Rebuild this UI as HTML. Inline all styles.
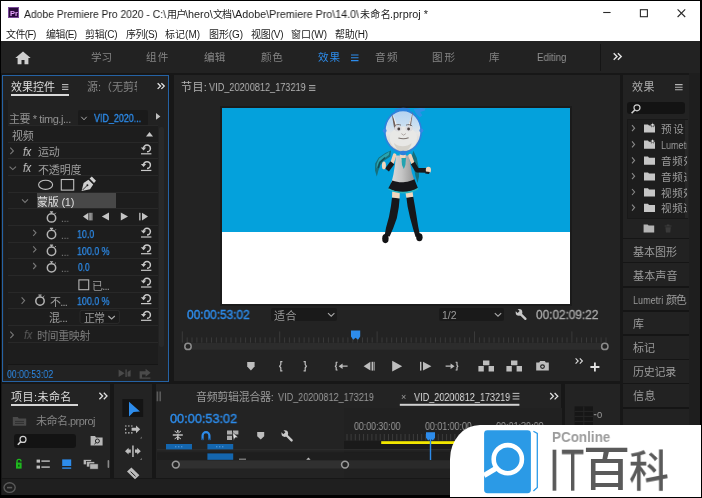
<!DOCTYPE html>
<html lang="zh-CN">
<head>
<meta charset="utf-8">
<title>Adobe Premiere Pro 2020</title>
<style>
*{box-sizing:border-box;margin:0;padding:0}
html,body{width:702px;height:498px;overflow:hidden;background:#000}
body{position:relative;font-family:"Liberation Sans","Noto Sans CJK SC",sans-serif;font-size:11px;color:#a7a7a7}
.a{position:absolute}
.p{position:absolute;background:#232323}
.x{position:absolute;white-space:nowrap;line-height:30px;height:30px;will-change:transform}
.h{position:absolute;height:1px;background:#2c2c2c}
svg{position:absolute;overflow:visible}
</style>
</head>
<body>
<!-- ===== title bar ===== -->
<div class="a" style="left:1.200px;top:1.200px;width:699.300px;height:39.800px;background:#fff"></div>
<div class="a" style="left:8px;top:7px;width:11px;height:11px;background:#2a0a3c;border:1px solid #7a4a9a"></div>
<svg style="left:600px;top:5px" width="100" height="16" viewBox="0 0 100 16"><g fill="none" stroke="#2a2a2a" stroke-width="1.100"><path d="M3.200 7.500h7.400"/><rect x="40.400" y="4.700" width="7" height="7"/><path d="M77.600 4.400l7.600 7.600M85.200 4.400l-7.600 7.600"/></g></svg>
<!-- ===== app bg ===== -->
<div class="a" style="left:1.200px;top:41px;width:699.300px;height:454.400px;background:#171717"></div>
<!-- workspace bar -->
<div class="p" style="left:1.200px;top:41px;width:699.300px;height:31.600px;background:#222"></div>
<svg style="left:15px;top:51px" width="16" height="14" viewBox="0 0 16 14"><path d="M8 0.5L0.3 7h2.3v6.3h3.9V9h3v4.3h3.9V7h2.3z" fill="#cfcfcf"/></svg>
<svg style="left:351px;top:54px" width="8" height="8" viewBox="0 0 8 8"><path d="M0 1h7.5M0 3.8h7.5M0 6.6h7.5" stroke="#2d8ceb" stroke-width="1.1"/></svg>
<div class="a" style="left:600px;top:44px;width:1px;height:27px;background:#151515"></div>
<svg style="left:613px;top:53px" width="9" height="7" viewBox="0 0 9 7"><path d="M0.7 0.3L4 3.5L0.7 6.7M4.9 0.3L8.2 3.5L4.9 6.7" stroke="#e4e4e4" stroke-width="1.4" fill="none"/></svg>

<!-- ===== PANELS ===== -->
<div class="p" id="ec" style="left:1.6px;top:75px;width:167.6px;height:306.6px;border:1.800px solid #2562a4;background:#222"></div>
<div class="p" id="pm" style="left:173.6px;top:75px;width:446px;height:306.4px"></div>
<div class="p" id="rp" style="left:623.4px;top:75px;width:66px;height:400px;background:#222"></div>
<div class="p" id="proj" style="left:2px;top:384px;width:108.400px;height:94.400px"></div>
<div class="p" id="tools" style="left:114px;top:384px;width:38.200px;height:94.400px"></div>
<div class="p" id="tl" style="left:156px;top:383.600px;width:405.400px;height:94.600px"></div>
<div class="p" id="am" style="left:565.200px;top:383.600px;width:54.600px;height:94.600px"></div>
<div class="p" id="status" style="left:1.500px;top:479.400px;width:699px;height:15.800px;background:#1f1f1f"></div>

<!-- effect controls -->
<div class="a" style="left:11.3px;top:94.4px;width:57.6px;height:1.8px;background:#d8d8d8"></div>
<svg style="left:62.2px;top:84px" width="7" height="6" viewBox="0 0 7 6"><path d="M0 0.6h6.4M0 3h6.4M0 5.4h6.4" stroke="#c8c8c8" stroke-width="1"/></svg>
<svg style="left:157.4px;top:83.2px" width="8" height="6.2" viewBox="0 0 9 7"><path d="M0.7 0.3L4 3.5L0.7 6.7M4.9 0.3L8.2 3.5L4.9 6.7" stroke="#e8e8e8" stroke-width="1.4" fill="none"/></svg>
<!-- clip dropdown -->
<div class="a" style="left:78px;top:110px;width:70px;height:15.5px;background:#1a1a1a;border-radius:2px"></div>
<svg style="left:80.5px;top:115.5px" width="6" height="5" viewBox="0 0 6 5"><path d="M0.3 0.8L3 3.8L5.7 0.8" stroke="#aaa" stroke-width="1" fill="none"/></svg>
<svg style="left:155.8px;top:113.4px" width="5" height="7" viewBox="0 0 5 7"><path d="M0 0L4.4 3.4L0 6.8z" fill="#c0c0c0"/></svg>
<!-- list area -->
<div class="a" style="left:7.5px;top:125.600px;width:150px;height:239px;background:#1d1d1d"></div>
<div class="a" style="left:159px;top:127px;width:4.600px;height:220px;background:#292929;border-radius:2px"></div>
<div class="a" style="left:3.600px;top:100px;width:4px;height:279px;background:#1c1c1c"></div>
<div class="h" style="left:7.5px;top:125.1px;width:150px;background:#282828"></div>
<div class="h" style="left:7.5px;top:141.8px;width:150px;background:#282828"></div>
<div class="h" style="left:7.5px;top:158.4px;width:150px;background:#282828"></div>
<div class="h" style="left:7.5px;top:175.0px;width:150px;background:#282828"></div>
<div class="h" style="left:7.5px;top:191.7px;width:150px;background:#282828"></div>
<div class="h" style="left:7.5px;top:208.3px;width:150px;background:#282828"></div>
<div class="h" style="left:7.5px;top:225.0px;width:150px;background:#282828"></div>
<div class="h" style="left:7.5px;top:241.6px;width:150px;background:#282828"></div>
<div class="h" style="left:7.5px;top:258.3px;width:150px;background:#282828"></div>
<div class="h" style="left:7.5px;top:274.9px;width:150px;background:#282828"></div>
<div class="h" style="left:7.5px;top:291.6px;width:150px;background:#282828"></div>
<div class="h" style="left:7.5px;top:308.2px;width:150px;background:#282828"></div>
<div class="h" style="left:7.5px;top:324.9px;width:150px;background:#282828"></div>
<div class="h" style="left:7.5px;top:341.5px;width:150px;background:#282828"></div>
<div class="h" style="left:7.5px;top:364px;width:150px;background:#161616"></div>
<svg style="left:145.6px;top:132.4px" width="7" height="5" viewBox="0 0 7 5"><path d="M0 4.5L3.5 0L7 4.5z" fill="#c8c8c8"/></svg>
<!-- mask highlight -->
<div class="a" style="left:37.2px;top:193.4px;width:78.4px;height:14.6px;background:#484848"></div>
<!-- chevrons -->
<svg style="left:0;top:0" width="170" height="380" viewBox="0 0 170 380">
<g fill="none" stroke="#787878" stroke-width="1.100">
<path d="M10.3 147.6L13.4 150.9L10.3 154.2"/>
<path d="M10.3 331.6L13.4 334.9L10.3 338.2"/>
<path d="M33.200 229.800L36 232.800L33.200 235.800"/>
<path d="M33.200 246.400L36 249.400L33.200 252.400"/>
<path d="M33.200 263L36 266L33.200 269"/>
<path d="M21.6 297.4L24.6 300.6L21.6 303.8"/>
<path d="M9.6 166.6L12.8 169.6L16 166.6"/>
<path d="M22 199.4L25 202.4L28 199.4"/>
<path d="M108.4 316L111.6 319L114.8 316" stroke="#aaa"/>
</g>
<!-- reset icons -->
<g id="rs" fill="none" stroke="#c8c8c8" stroke-width="1.5">
<path d="M143.600 148.400a3.400 3.400 0 1 1 3.400 3.400"/><path d="M140.800 147.400l2.800 3l2.600-3z" fill="#c8c8c8" stroke="none"/><path d="M141 153.800h10.400" stroke-width="1.200"/>
</g>
<use href="#rs" y="16.650"/><use href="#rs" y="83.200"/><use href="#rs" y="99.900"/><use href="#rs" y="116.500"/><use href="#rs" y="133.200"/><use href="#rs" y="149.800"/><use href="#rs" y="166.500"/>
<!-- mask shape tools -->
<ellipse cx="45.6" cy="184.8" rx="7" ry="4.6" fill="none" stroke="#c0c0c0" stroke-width="1.1"/>
<rect x="61.3" y="179.5" width="12.4" height="10.6" fill="none" stroke="#c0c0c0" stroke-width="1.1"/>
<path d="M81.600 191L83.600 183L88.400 179.800L93.200 184.600L90 189.200Z M89.600 178.600L91.800 176.600L96 180.800L94 183Z" fill="#d0d0d0"/><path d="M82.600 190L86.800 185.800" stroke="#1d1d1d" stroke-width="0.900"/><circle cx="87.400" cy="185.200" r="1" fill="#1d1d1d"/>
<!-- stopwatches -->
<g id="sw" fill="none" stroke="#b4b4b4" stroke-width="1.500"><circle cx="51.500" cy="217.900" r="4.200"/><path d="M49.900 211.800h3.200M51.500 211.800v1.800" stroke-width="1.200"/><path d="M54.600 214l1.200-1.200" stroke-width="1"/></g>
<use href="#sw" y="16.650"/><use href="#sw" y="33.300"/><use href="#sw" y="49.950"/><use href="#sw" x="-11.500" y="83.200"/>
<!-- keyframe nav -->
<g fill="#c4c4c4">
<path d="M83 216.6l5.4-3.8v7.6z"/><rect x="89.4" y="212.8" width="1.3" height="7.6"/><rect x="91.4" y="212.8" width="1" height="7.6"/>
<path d="M101.8 216.6l7.2-4v8z"/>
<path d="M128 216.6l-7.2-4v8z"/>
<rect x="139.2" y="212.8" width="1.3" height="7.6"/><path d="M148 216.6l-6-3.8v7.6z"/>
</g>
<!-- checkbox -->
<rect x="78.9" y="279.9" width="9.8" height="9.8" fill="none" stroke="#b4b4b4" stroke-width="1.1"/>
<!-- blend dropdown -->
<rect x="80" y="310.4" width="39.4" height="13" rx="2" fill="#1a1a1a" stroke="#2e2e2e" stroke-width="0.8"/>
<path d="M108.4 316L111.6 319L114.8 316" stroke="#aaa" stroke-width="1.1" fill="none"/>
<!-- bottom right icons -->
<g fill="#4a4a4a"><path d="M118.6 369.4l6 3.8l-6 3.8z"/><rect x="125.4" y="369.4" width="1.4" height="7.6"/><path d="M127.6 372l3-2v6.6h-3z"/>
<path d="M139.6 371.2h6v-2.4l5 4l-5 4v-2.4h-3.6v3.2h8.4v1.2h-10.8z"/></g>
</svg>

<!-- program monitor -->
<svg style="left:308.600px;top:84.600px" width="7" height="6" viewBox="0 0 7 6"><path d="M0 0.6h6.4M0 3h6.4M0 5.4h6.4" stroke="#b0b0b0" stroke-width="1"/></svg>
<div class="a" style="left:219.8px;top:105.8px;width:352.3px;height:200.2px;background:#1b1b1b"></div>
<div class="a" style="left:221.8px;top:107.8px;width:348.3px;height:196.2px;background:#fff"></div>
<div class="a" style="left:221.8px;top:107.8px;width:348.3px;height:124.600px;background:#04a1dc"></div>
<svg style="left:0;top:0" width="702" height="320" viewBox="0 0 702 320">
<defs>
<linearGradient id="hg" x1="0" y1="0" x2="0" y2="1"><stop offset="0" stop-color="#b4d2f0"/><stop offset="0.35" stop-color="#c9dff2"/><stop offset="0.55" stop-color="#e6e6e6"/><stop offset="0.85" stop-color="#d8d6d0"/><stop offset="1" stop-color="#bcb8b0"/></linearGradient>
<linearGradient id="tg" x1="0" y1="0" x2="1" y2="0"><stop offset="0" stop-color="#dcdcdc"/><stop offset="0.450" stop-color="#c4c4c4"/><stop offset="1" stop-color="#909090"/></linearGradient>
</defs>
<!-- hair back -->
<path d="M391 150.400L385.400 153L378.600 157.800L375.200 163.600L375 170.600L376.800 176.400L378.400 170.400L380.400 165L384.400 160.400L390.400 156.400Z" fill="#17707c"/>
<path d="M389.600 151.600L384.600 154.400L379.200 158.600L376.800 163.600L376.400 168.600L378.600 163.800L382.600 159.400L388.800 155Z" fill="#2fb6c2" opacity="0.750"/>
<path d="M385 157.400L379.600 162.400L378.400 168" stroke="#0c3a44" stroke-width="1.400" fill="none" opacity="0.700"/>
<path d="M413.400 150.800L416.800 158L418.800 168L419 176.400L417.600 183L415.400 176L413.600 166L411.600 157Z" fill="#14707e"/>
<!-- legs -->
<path d="M392 197.6l7.6 0.6l-0.8 9l-2 11l-3.6 10l-3.6 8.4l-5-0.8l1.4-8l3-11l2-11z" fill="#17171a"/>
<path d="M406.4 197.4l6.8-0.8l1.6 9l1.8 11l1.6 10l2 9.6l-4.6 0.8l-2.6-8.6l-3-11l-2.4-11z" fill="#17171a"/>
<path d="M392.2 191.4l7.6 0.4l-0.2 6.6l-7.6-0.8z" fill="#f2d6bc"/>
<path d="M405.4 191.6l7-0.6l0.9 5.8l-7 1z" fill="#f2d6bc"/>
<ellipse cx="385.4" cy="238.6" rx="3.2" ry="4.6" fill="#121214"/>
<ellipse cx="419.4" cy="237.2" rx="3.2" ry="4" fill="#121214"/>
<!-- torso -->
<path d="M396 155.6l13 0l1.2 8l1.6 9l3.6 10.6l-24.6 2l2.6-10.6l1.6-10z" fill="url(#tg)"/>
<path d="M399.6 154.6l6.4 0l-1.4 5.6l-2 1.6l-1.8-1.6z" fill="#f2d6bc"/>
<path d="M401.4 158l4.6 0l-0.6 7l-1.6 4l-1.8-4z" fill="#23a3b0"/>
<!-- skirt -->
<path d="M392.4 180.4c4 1.6 8.6 2.2 12.6 1.6c3.4-0.4 6.6-1.4 9.4-2.8l3.6 9c-4 2.6-9.6 4-15 4c-5.6 0-11-1.4-14.8-3.8z" fill="#17171b"/>
<path d="M388.6 188.2c4 2.4 9 3.6 14.4 3.6c5.4 0 11-1.4 15-4l0.4 1.4c-4 2.8-9.8 4.2-15.4 4.2c-5.6 0-11-1.4-14.8-3.8z" fill="#2ab4c0"/>
<!-- arms -->
<path d="M394.600 155.200L392.200 162.600" stroke="#f0d0b6" stroke-width="3.600" stroke-linecap="round" fill="none"/>
<path d="M410 155.600L412.800 163.200" stroke="#f0d0b6" stroke-width="3.600" stroke-linecap="round" fill="none"/>
<path d="M392.400 162.800L387 170" stroke="#19191c" stroke-width="4.800" fill="none"/>
<path d="M412.800 163L417 170.200L426 170.400" stroke="#19191c" stroke-width="4.600" stroke-linejoin="round" fill="none"/>
<ellipse cx="383.900" cy="165.400" rx="2" ry="3.900" fill="#f2d6bc"/>
<ellipse cx="428.400" cy="170" rx="2.600" ry="3.300" fill="#f2d6bc"/>
<path d="M425.600 171.400l4.400 0.600l-1.200 2l-3.600-0.400z" fill="#19191c"/>
<!-- head mask -->
<ellipse cx="403" cy="131.2" rx="18.2" ry="20.8" fill="url(#hg)" stroke="#2f80dc" stroke-width="1.6"/>
<path d="M391.6 113.4l6 14.6l-3.2 1.6z" fill="#6e5e5a"/><path d="M393.2 114.6l4.6 12.6l-1.8 0.8z" fill="#f4f2f0"/>
<path d="M413 111.6l-5.4 16.4l2.8 1.2z" fill="#7e6e6a"/><path d="M412 113.4l-4.2 13.8l1.6 0.6z" fill="#f6f4f2"/>
<ellipse cx="403.400" cy="138.600" rx="13.600" ry="12" fill="#e8e8e6"/>
<ellipse cx="398" cy="128.6" rx="3.8" ry="2.8" fill="#dcdce0"/><ellipse cx="409" cy="128.6" rx="3.8" ry="2.8" fill="#dcdce0"/>
<circle cx="398.8" cy="129" r="1.4" fill="#4a4040"/><circle cx="408.6" cy="129" r="1.4" fill="#4a4040"/>
<path d="M394.6 125.8c2.2-1.6 4.6-1.6 6.4-0.6M406 125.2c2-1 4.6-0.8 6.2 0.8" stroke="#7a7474" stroke-width="1" fill="none"/>
<path d="M398.4 138c3.2 1 7 1 10.2-0.2" stroke="#7c7470" stroke-width="1.1" fill="none"/>
<path d="M401.4 133.6l2.2 1.6l2.2-1.6" stroke="#a8a09c" stroke-width="0.9" fill="none"/>
<path d="M394 143c4.6 4.4 13 4.4 17.6 0c-1 5.4-4.6 8.6-8.8 8.6c-4 0-7.6-3.2-8.800-8.600z" fill="#cfcbc2" opacity="0.75"/>
<!-- mask control points -->
<circle cx="384.6" cy="130.8" r="2" fill="#3a88e6"/><circle cx="421.4" cy="130.6" r="2" fill="#3a88e6"/>
<path d="M395 110.6c4-2 10-2.4 14.600-0.800" stroke="#2f80dc" stroke-width="1.8" fill="none"/>
<path d="M413.6 109.200l7-1.200l5 0.600l-1 2.200l-4.400 1.200l2.200 3.200l-2.600 2.400l-3-3z" fill="#3a8ce8" opacity="0.8"/>
<ellipse cx="403.200" cy="153" rx="3.200" ry="2.200" fill="#2f80dc"/>
</svg>
<!-- controls -->
<div class="a" style="left:270.8px;top:308.4px;width:66.6px;height:12.6px;background:#1a1a1a;border-radius:2px"></div>
<div class="a" style="left:439.4px;top:308.4px;width:64.8px;height:12.6px;background:#1a1a1a;border-radius:2px"></div>
<svg style="left:0;top:300px" width="702" height="84" viewBox="0 300 702 84">
<g fill="none" stroke="#aaa" stroke-width="1.1"><path d="M328 313.2l3.2 3l3.2-3"/><path d="M494.8 313.2l3.2 3l3.2-3"/></g>
<!-- wrench -->
<g transform="translate(515.400,308.800)"><path d="M4 4L10 10" stroke="#c8c8c8" stroke-width="2.400" stroke-linecap="round"/><circle cx="3.600" cy="3.600" r="3.300" fill="#c8c8c8"/><path d="M-0.400 1.600L1.600 -0.400L4.200 2.200L2.200 4.200z" fill="#232323"/></g>
<!-- ruler -->
<g stroke="#3a3a3a" stroke-width="1"><path d="M182.3 331.4V342.6"/><path d="M187.2 337.4V342.6"/><path d="M192.0 337.4V342.6"/><path d="M196.9 337.4V342.6"/><path d="M201.8 337.4V342.6"/><path d="M206.7 337.4V342.6"/><path d="M211.5 337.4V342.6"/><path d="M216.4 337.4V342.6"/><path d="M221.3 337.4V342.6"/><path d="M226.1 337.4V342.6"/><path d="M231.0 337.4V342.6"/><path d="M235.9 337.4V342.6"/><path d="M240.7 337.4V342.6"/><path d="M245.6 337.4V342.6"/><path d="M250.5 337.4V342.6"/><path d="M255.4 337.4V342.6"/><path d="M260.2 337.4V342.6"/><path d="M265.1 337.4V342.6"/><path d="M270.0 337.4V342.6"/><path d="M274.8 337.4V342.6"/><path d="M279.7 331.4V342.6"/><path d="M284.6 337.4V342.6"/><path d="M289.4 337.4V342.6"/><path d="M294.3 337.4V342.6"/><path d="M299.2 337.4V342.6"/><path d="M304.1 337.4V342.6"/><path d="M308.9 337.4V342.6"/><path d="M313.8 337.4V342.6"/><path d="M318.7 337.4V342.6"/><path d="M323.5 337.4V342.6"/><path d="M328.4 337.4V342.6"/><path d="M333.3 337.4V342.6"/><path d="M338.1 337.4V342.6"/><path d="M343.0 337.4V342.6"/><path d="M347.9 337.4V342.6"/><path d="M352.8 337.4V342.6"/><path d="M357.6 337.4V342.6"/><path d="M362.5 337.4V342.6"/><path d="M367.4 337.4V342.6"/><path d="M372.2 337.4V342.6"/><path d="M377.1 331.4V342.6"/><path d="M382.0 337.4V342.6"/><path d="M386.8 337.4V342.6"/><path d="M391.7 337.4V342.6"/><path d="M396.6 337.4V342.6"/><path d="M401.5 337.4V342.6"/><path d="M406.3 337.4V342.6"/><path d="M411.2 337.4V342.6"/><path d="M416.1 337.4V342.6"/><path d="M420.9 337.4V342.6"/><path d="M425.8 337.4V342.6"/><path d="M430.7 337.4V342.6"/><path d="M435.5 337.4V342.6"/><path d="M440.4 337.4V342.6"/><path d="M445.3 337.4V342.6"/><path d="M450.2 337.4V342.6"/><path d="M455.0 337.4V342.6"/><path d="M459.9 337.4V342.6"/><path d="M464.8 337.4V342.6"/><path d="M469.6 337.4V342.6"/><path d="M474.5 331.4V342.6"/><path d="M479.4 337.4V342.6"/><path d="M484.2 337.4V342.6"/><path d="M489.1 337.4V342.6"/><path d="M494.0 337.4V342.6"/><path d="M498.9 337.4V342.6"/><path d="M503.7 337.4V342.6"/><path d="M508.6 337.4V342.6"/><path d="M513.5 337.4V342.6"/><path d="M518.3 337.4V342.6"/><path d="M523.2 337.4V342.6"/><path d="M528.1 337.4V342.6"/><path d="M532.9 337.4V342.6"/><path d="M537.8 337.4V342.6"/><path d="M542.7 337.4V342.6"/><path d="M547.6 337.4V342.6"/><path d="M552.4 337.4V342.6"/><path d="M557.3 337.4V342.6"/><path d="M562.2 337.4V342.6"/><path d="M567.0 337.4V342.6"/><path d="M571.9 331.4V342.6"/><path d="M576.8 337.4V342.6"/><path d="M581.6 337.4V342.6"/><path d="M586.5 337.4V342.6"/><path d="M591.4 337.4V342.6"/><path d="M596.3 337.4V342.6"/><path d="M601.1 337.4V342.6"/><path d="M606.0 337.4V342.6"/></g>
<rect x="184" y="343" width="424" height="6.8" rx="3.4" fill="#2c2c2c"/>
<circle cx="188" cy="346.4" r="3.2" fill="#232323" stroke="#8c8c8c" stroke-width="1.5"/>
<circle cx="604.8" cy="346.4" r="3.2" fill="#232323" stroke="#8c8c8c" stroke-width="1.5"/>
<path d="M351 330.4h9.2v6l-2.2 3.4l-2.4-2l-2.4 2l-2.2-3.4z" fill="#2d8ceb"/>
<!-- transport -->
<g fill="#bdbdbd">
<path d="M247.2 362h7.4v4.4l-3.7 4l-3.7-4z"/>
<path d="M336 361.8h1.6v1h-0.8v2.6l-0.8 0.8l0.8 0.8v2.6h0.8v1h-1.6l-0.4-0.4v-2.8l-1-1.2l1-1.2v-2.8z M347.6 365.6h-5v-2.2l-4 2.8l4 2.8v-2.2h5z"/>
<path d="M363.6 366.2l6.8-4.4v8.8z"/><rect x="371.6" y="361.8" width="1.4" height="8.8"/><rect x="373.6" y="361.8" width="1" height="8.8"/>
<path d="M392.2 360.8l10 5.4l-10 5.4z"/>
<rect x="420" y="361.8" width="1.4" height="8.8"/><path d="M431.4 366.2l-8.4-4.4v8.8z"/>
<path d="M445.6 365.6h5v-2.2l4 2.8l-4 2.8v-2.2h-5z M457.2 361.8h-1.6v1h0.8v2.6l0.8 0.8l-0.8 0.8v2.6h-0.8v1h1.6l0.4-0.4v-2.8l1-1.2l-1-1.2v-2.8z"/>
<path d="M478.4 366h5.4v5.6h-5.4z M488.6 366h5.4v5.6h-5.4z M483 360.6h6.4v4.6h-6.4z"/>
<path d="M506.4 366h5.4v5.6h-5.4z M516.6 366h5.4v5.6h-5.4z M511 360.6h6.4v4.6h-6.4z"/>
<path d="M536.2 362.6h3l1-1.6h4.6l1 1.6h3v8h-12.6z"/>
</g>
<circle cx="542.5" cy="366.6" r="2.4" fill="#232323"/><circle cx="542.5" cy="366.6" r="1.2" fill="#bdbdbd"/>
<g fill="none" stroke="#bdbdbd" stroke-width="1.2">
<path d="M282.4 361.6h-1.6v3l-1.2 1.6l1.2 1.6v3h1.6"/>
<path d="M303.6 361.6h1.6v3l1.2 1.6l-1.2 1.6v3h-1.6"/>
</g>
<path d="M575.6 358.4l2.6 2.6l-2.6 2.6M579.8 358.4l2.6 2.6l-2.6 2.6" stroke="#dcdcdc" stroke-width="1.1" fill="none"/>
<path d="M590.4 367h9M594.9 362.6v8.8" stroke="#e0e0e0" stroke-width="1.8" fill="none"/>
</svg>

<!-- right panel -->
<div class="a" style="left:689.400px;top:73px;width:11.100px;height:422.400px;background:#1e1e1e"></div>
<svg style="left:674.8px;top:84px" width="8" height="7" viewBox="0 0 8 7"><path d="M0 0.6h7.6M0 3.2h7.6M0 5.8h7.6" stroke="#b4b4b4" stroke-width="1.1"/></svg>
<div class="a" style="left:627.4px;top:101.6px;width:57.2px;height:12.8px;background:#131313;border-radius:3px"></div>
<svg style="left:631.4px;top:103.8px" width="10" height="10" viewBox="0 0 10 10"><circle cx="6" cy="3.8" r="3" fill="none" stroke="#d0d0d0" stroke-width="1.2"/><path d="M3.8 6L0.6 9.2" stroke="#d0d0d0" stroke-width="1.6"/></svg>
<div class="a" style="left:627.4px;top:118.6px;width:61px;height:100px;background:#1d1d1d;border:1px solid #181818"></div>
<div class="a" style="left:685.4px;top:119.6px;width:2.6px;height:98px;background:#272727"></div>
<svg style="left:0;top:0" width="702" height="240" viewBox="0 0 702 240">
<g id="rrow">
<path d="M632 125.2L634.6 128.2L632 131.2" fill="none" stroke="#8a8a8a" stroke-width="1.1"/>
<path d="M644 124.4h4l1 1.2h6v7h-11z" fill="#c6c6c6"/>
</g>
<use href="#rrow" y="16.2"/><use href="#rrow" y="32.2"/><use href="#rrow" y="48"/><use href="#rrow" y="63.8"/><use href="#rrow" y="79.4"/>
<path d="M652.6 122.6l0.7 1.5l1.6 0.2l-1.2 1.1l0.3 1.6l-1.4-0.8l-1.4 0.8l0.3-1.6l-1.2-1.1l1.6-0.2z" fill="#e0e0e0" stroke="#1d1d1d" stroke-width="0.5"/>
<path d="M652.6 138.8l0.7 1.5l1.6 0.2l-1.2 1.1l0.3 1.6l-1.4-0.8l-1.4 0.8l0.3-1.6l-1.2-1.1l1.6-0.2z" fill="#e0e0e0" stroke="#1d1d1d" stroke-width="0.5"/>
<path d="M643.6 224.4h4l1 1.2h5.6v6.8h-10.6z" fill="#b4b4b4"/>
<path d="M664.6 225.6h7v0.9h-7z M665.4 227.2h5.4l-0.5 5.4h-4.4z M666.8 224.6h2.6v1h-2.6z" fill="#3a3a3a"/>
</g>
</svg>
<div class="h" style="left:623.400px;top:237.6px;width:66px;height:1.500px;background:#151515"></div>
<div class="h" style="left:623.400px;top:261.8px;width:66px;height:1.500px;background:#151515"></div>
<div class="h" style="left:623.400px;top:286.0px;width:66px;height:1.500px;background:#151515"></div>
<div class="h" style="left:623.400px;top:310.2px;width:66px;height:1.500px;background:#151515"></div>
<div class="h" style="left:623.400px;top:334.4px;width:66px;height:1.500px;background:#151515"></div>
<div class="h" style="left:623.400px;top:358.6px;width:66px;height:1.500px;background:#151515"></div>
<div class="h" style="left:623.400px;top:382.8px;width:66px;height:1.500px;background:#151515"></div>
<div class="h" style="left:623.400px;top:407.0px;width:66px;height:1.500px;background:#151515"></div>

<!-- project panel -->
<div class="a" style="left:11.4px;top:404.2px;width:67px;height:2px;background:#d4d4d4"></div>
<div class="a" style="left:13.6px;top:434px;width:62px;height:14px;background:#131313;border-radius:3px"></div>
<svg style="left:0;top:380px" width="702" height="118" viewBox="0 380 702 118">
<path d="M99.4 392.8L102.6 396L99.4 399.2M103.8 392.8L107 396L103.8 399.2" stroke="#e0e0e0" stroke-width="1.3" fill="none"/>
<!-- bin icon -->
<path d="M12.8 417h5l1 1.4h7.4v7.4h-13.4z" fill="#4a4a4a"/><path d="M15 421.4h9M15 423.4h9" stroke="#2a2a2a" stroke-width="0.8"/>
<!-- magnifier -->
<circle cx="23" cy="439.4" r="3" fill="none" stroke="#d0d0d0" stroke-width="1.2"/><path d="M20.8 441.6L17.8 444.8" stroke="#d0d0d0" stroke-width="1.6"/>
<!-- find folder -->
<path d="M90.6 436h4.4l1 1.4h6.6v8.2h-12z" fill="#b8b8b8"/><circle cx="97.4" cy="441" r="2" fill="none" stroke="#232323" stroke-width="1"/><path d="M96 442.6l-1.6 1.6" stroke="#232323" stroke-width="1"/>
<!-- bottom icons -->
<path d="M16 462.6h5.6v6h-5.6z" fill="#1fb81f"/><path d="M17 463v-1.6a2 2 0 0 1 4 0" fill="none" stroke="#1fb81f" stroke-width="1.4"/><rect x="18" y="464.6" width="1.6" height="2" fill="#0a5a0a"/>
<g fill="#c0c0c0"><rect x="36.6" y="459.6" width="3.4" height="3"/><rect x="36.6" y="465.6" width="3.4" height="3"/><rect x="41.4" y="460.4" width="8.4" height="1.4"/><rect x="41.4" y="466.4" width="8.4" height="1.4"/></g>
<rect x="62.2" y="459.4" width="9" height="6.6" fill="#2d8ceb"/><rect x="62.2" y="467.4" width="9" height="1.4" fill="#2d8ceb"/>
<g fill="#b4b4b4" stroke="#232323" stroke-width="0.7"><rect x="83.2" y="459.4" width="8.4" height="5.4"/><rect x="86.4" y="461.6" width="8.4" height="5.4"/><rect x="89.8" y="463.8" width="8.4" height="5.4"/></g>
<rect x="107.6" y="460" width="1.6" height="8" rx="0.8" fill="#8a8a8a"/>
<!-- tools -->
<rect x="122.4" y="399" width="20.8" height="18" fill="#141414"/>
<path d="M129 401.8l11 9.6l-6.4 0.6l-4.6 4.6z" fill="#2d8ceb"/>
<g fill="#bdbdbd">
<path d="M131.6 427.8h4.4v-2.4l4.2 3.9l-4.2 3.9v-2.4h-4.4z"/>
<path d="M125 425.4h1.6v1.2h-1.6z M128 425.4h1.6v1.2h-1.6z M131 425.4h1.6v1.2h-1.6z M125 428.6h1.2v1.6h-1.2z M125 432.2h1.6v1.2h-1.6z M128 432.2h1.6v1.2h-1.6z M131 432.2h1.6v1.2h-1.6z"/>
<path d="M132.2 445.4h1.5v11.6h-1.5z M130.8 449.6v3.2h-2.2v1.8l-3.6-3.4l3.6-3.4v1.8z M135 449.6v3.2h2.2v1.8l3.6-3.4l-3.6-3.4v1.8z"/>
<path d="M127 471.600l4.400-4l8 7.600l-4.400 4z"/><path d="M130.600 471.600l5 4.800" stroke="#232323" stroke-width="1"/>
</g>
<path d="M139.8 438.6l2.2-2.2v2.2z M139.8 460l2.2-2.2v2.2z" fill="#6a6a6a"/>
<!-- timeline header -->
<path d="M156.6 391.6h1.600v9.600h-1.600z M159.400 391.600h1.600v9.600h-1.600z" fill="#5a5a5a"/>
<path d="M550.2 393L553.4 396.2L550.2 399.4M554.6 393L557.8 396.2L554.6 399.4" stroke="#e0e0e0" stroke-width="1.3" fill="none"/>
<rect x="399.8" y="403.8" width="119.6" height="2" fill="#d0d0d0"/>
<path d="M512.6 393.4h6.8M512.6 396.2h6.8M512.6 399h6.8" stroke="#c4c4c4" stroke-width="1"/>
<!-- track area -->
<rect x="344" y="408" width="218" height="70" fill="#212121"/>
<rect x="157" y="449.2" width="405" height="1" fill="#2e2e2e"/>
<rect x="157" y="452.6" width="405" height="1" fill="#1a1a1a"/>
<rect x="344" y="441" width="218" height="8" fill="#1a1a1a"/>
<rect x="157" y="453" width="405" height="7" fill="#1e1e1e"/>
<rect x="172" y="460.400" width="177" height="8.200" rx="4.100" fill="#303030"/>
<rect x="349" y="460.400" width="212" height="8.200" fill="#2a2a2a"/>
<g stroke="#3c3c3c" stroke-width="1"><path d="M347.0 434V440.400"/><path d="M351.1 434V440.400"/><path d="M355.3 434V440.400"/><path d="M359.4 434V440.400"/><path d="M363.6 434V440.400"/><path d="M367.7 434V440.400"/><path d="M371.9 434V440.400"/><path d="M376.0 434V440.400"/><path d="M380.2 434V440.400"/><path d="M384.3 434V440.400"/><path d="M388.5 434V440.400"/><path d="M392.6 434V440.400"/><path d="M396.8 434V440.400"/><path d="M400.9 434V440.400"/><path d="M405.1 434V440.400"/><path d="M409.2 434V440.400"/><path d="M413.4 434V440.400"/><path d="M417.5 434V440.400"/><path d="M421.7 434V440.400"/><path d="M425.8 434V440.400"/><path d="M430.0 434V440.400"/><path d="M434.1 434V440.400"/><path d="M438.3 434V440.400"/><path d="M442.4 434V440.400"/><path d="M446.6 434V440.400"/><path d="M450.7 434V440.400"/><path d="M454.9 434V440.400"/><path d="M459.0 434V440.400"/><path d="M463.2 434V440.400"/><path d="M467.3 434V440.400"/><path d="M471.5 434V440.400"/><path d="M475.6 434V440.400"/><path d="M479.8 434V440.400"/><path d="M483.9 434V440.400"/><path d="M488.1 434V440.400"/><path d="M492.2 434V440.400"/><path d="M496.4 434V440.400"/><path d="M500.5 434V440.400"/><path d="M504.7 434V440.400"/><path d="M508.8 434V440.400"/><path d="M513.0 434V440.400"/><path d="M517.1 434V440.400"/><path d="M521.3 434V440.400"/><path d="M525.4 434V440.400"/><path d="M529.6 434V440.400"/><path d="M533.7 434V440.400"/><path d="M537.9 434V440.400"/><path d="M542.0 434V440.400"/><path d="M546.2 434V440.400"/><path d="M550.3 434V440.400"/><path d="M554.5 434V440.400"/><path d="M558.6 434V440.400"/></g>
<rect x="381.2" y="441.2" width="181" height="2.8" fill="#f2e600"/>
<path d="M426 432.2h9v5.6l-2.2 2.6l-2.3-1.6l-2.3 1.6l-2.2-2.6z" fill="#2d8ceb"/>
<rect x="429.8" y="438" width="1.4" height="22" fill="#2d8ceb"/>
<!-- timeline tool icons -->
<g fill="#bdbdbd">
<path d="M172.8 434.2h10v1.6h-10z M177 430h1.6v10h-1.6z M174.6 431.4l3.2 2.6l3.2-2.6v-1l-3.2 2.4l-3.2-2.4z M174.6 438.6l3.2-2.6l3.2 2.6v1l-3.2-2.4l-3.2 2.4z"/>
<path d="M227 430.4h5v4.2h-5z M227 435.8h5v4.2h-5z M233 430.4h5.4v4.2h-5.4z" opacity="0.9"/>
<path d="M232.4 432l5.8 5.4l-3 0.4l-1.6 2.6z" fill="#e0e0e0" stroke="#232323" stroke-width="0.6"/>
<path d="M257.2 432h7v4.2l-3.5 3.4l-3.5-3.4z"/>
<g transform="translate(281.200,430)"><path d="M4 4L10.400 10.400" stroke="#c8c8c8" stroke-width="2.400" stroke-linecap="round"/><circle cx="3.600" cy="3.600" r="3.300" fill="#c8c8c8"/><path d="M-0.400 1.600L1.600 -0.400L4.200 2.200L2.200 4.200z" fill="#232323"/></g>
</g>
<path d="M202.6 440v-4.4a3.4 3.4 0 0 1 6.8 0v4.4" fill="none" stroke="#2d8ceb" stroke-width="2.2"/>
<rect x="201.5" y="438.6" width="2.2" height="1.6" fill="#1a4f88"/><rect x="208.3" y="438.6" width="2.2" height="1.6" fill="#1a4f88"/>
<!-- blue bars -->
<rect x="166" y="444" width="26" height="5.4" fill="#1466ae"/>
<rect x="207.4" y="444" width="25.8" height="5.4" fill="#1466ae"/>
<rect x="207.4" y="453.4" width="25.8" height="6.4" fill="#1466ae"/>
<path d="M175 446.8h1.4M178 446.8h1.4M181 446.8h1.4M216 446.8h1.4M219 446.8h1.4M222 446.8h1.4" stroke="#5aa0e0" stroke-width="1"/>
<rect x="239" y="458.6" width="7" height="1.2" fill="#8a8a8a"/>
<path d="M306.2 459.8l2.2-2.4l2.2 2.4z" fill="#c0c0c0"/>
<circle cx="175.8" cy="464.6" r="3.4" fill="#232323" stroke="#9a9a9a" stroke-width="1.6"/>
<circle cx="345" cy="464.6" r="3.4" fill="#232323" stroke="#9a9a9a" stroke-width="1.6"/>
<!-- audio meter -->
<rect x="574.6" y="406.4" width="18.4" height="72" fill="#161616"/>
<path d="M574.6 411.4h18.4M574.6 416.4h18.4M574.6 421.4h18.4M583.8 406.4v72" stroke="#262626" stroke-width="1"/>
<rect x="593.8" y="414.2" width="2.6" height="1" fill="#9a9a9a"/>
<!-- status icon -->
<ellipse cx="9.6" cy="487.6" rx="5.6" ry="4.8" fill="none" stroke="#5a5a5a" stroke-width="1.4"/><path d="M7 487.6h5.2" stroke="#5a5a5a" stroke-width="1.6"/>
</svg>

<div class="x" style="left:9.62px;top:-1.20px;font-size:6.5px;letter-spacing:0.000px;color:#e9a6ff;transform:scale(1.1526,1.0000);transform-origin:0 0;font-weight:700">Pr</div>
<div class="x" style="left:23.60px;top:-1.40px;font-size:10.8px;letter-spacing:0.000px;color:#1c1c1c;transform:scale(0.9573,1.0000);transform-origin:0 0">Adobe Premiere Pro 2020 - C:\</div>
<div class="x" style="left:166.67px;top:-0.20px;font-size:10px;letter-spacing:-0.700px;color:#1c1c1c">用户</div>
<div class="x" style="left:185.20px;top:-1.40px;font-size:10.8px;letter-spacing:0.000px;color:#1c1c1c;transform:scale(1.0048,1.0000);transform-origin:0 0">\hero\</div>
<div class="x" style="left:213.27px;top:-0.20px;font-size:10px;letter-spacing:-0.900px;color:#1c1c1c">文档</div>
<div class="x" style="left:232.30px;top:-1.40px;font-size:10.8px;letter-spacing:0.000px;color:#1c1c1c;transform:scale(0.9948,1.0000);transform-origin:0 0">\Adobe\Premiere Pro\14.0\</div>
<div class="x" style="left:359.63px;top:-0.20px;font-size:10px;letter-spacing:0.350px;color:#1c1c1c">未命名</div>
<div class="x" style="left:389.50px;top:-1.40px;font-size:10.8px;letter-spacing:0.000px;color:#1c1c1c;transform:scale(1.0036,1.0000);transform-origin:0 0">.prproj *</div>
<div class="x" style="left:6.37px;top:19.90px;font-size:10px;letter-spacing:-0.592px;color:#1c1c1c">文件(F)</div>
<div class="x" style="left:45.57px;top:19.90px;font-size:10px;letter-spacing:-0.558px;color:#1c1c1c">编辑(E)</div>
<div class="x" style="left:84.53px;top:19.90px;font-size:10px;letter-spacing:-0.342px;color:#1c1c1c">剪辑(C)</div>
<div class="x" style="left:125.67px;top:19.90px;font-size:10px;letter-spacing:-0.458px;color:#1c1c1c">序列(S)</div>
<div class="x" style="left:165.47px;top:19.90px;font-size:10px;letter-spacing:0.050px;color:#1c1c1c">标记(M)</div>
<div class="x" style="left:208.73px;top:19.90px;font-size:10px;letter-spacing:-0.100px;color:#1c1c1c">图形(G)</div>
<div class="x" style="left:251.07px;top:19.90px;font-size:10px;letter-spacing:-0.183px;color:#1c1c1c">视图(V)</div>
<div class="x" style="left:291.13px;top:19.90px;font-size:10px;letter-spacing:0.008px;color:#1c1c1c">窗口(W)</div>
<div class="x" style="left:335.47px;top:19.90px;font-size:10px;letter-spacing:-0.200px;color:#1c1c1c">帮助(H)</div>
<div class="x" style="left:90.53px;top:42.17px;font-size:10.6px;letter-spacing:-0.133px;color:#848484">学习</div>
<div class="x" style="left:146.27px;top:42.17px;font-size:10.6px;letter-spacing:1.067px;color:#848484">组件</div>
<div class="x" style="left:203.67px;top:42.17px;font-size:10.6px;letter-spacing:0.267px;color:#848484">编辑</div>
<div class="x" style="left:260.67px;top:42.17px;font-size:10.6px;letter-spacing:0.667px;color:#848484">颜色</div>
<div class="x" style="left:318.07px;top:42.17px;font-size:10.6px;letter-spacing:0.867px;color:#2d8ceb">效果</div>
<div class="x" style="left:375.33px;top:42.17px;font-size:10.6px;letter-spacing:1.500px;color:#848484">音频</div>
<div class="x" style="left:432.00px;top:42.17px;font-size:10.6px;letter-spacing:1.833px;color:#848484">图形</div>
<div class="x" style="left:489.47px;top:42.17px;font-size:10.6px;letter-spacing:0.000px;color:#848484">库</div>
<div class="x" style="left:536.76px;top:43.30px;font-size:10px;letter-spacing:0.000px;color:#909090;transform:scale(0.9614,1.0000);transform-origin:0 0">Editing</div>
<div class="x" style="left:10.73px;top:71.93px;font-size:11px;letter-spacing:-0.000px;color:#dedede">效果控件</div>
<div class="x" style="left:86.83px;top:71.93px;font-size:11px;letter-spacing:-0.028px;color:#848484;width:50.17px;overflow:hidden">源:（无剪辑）</div>
<div class="x" style="left:8.93px;top:103.53px;font-size:11px;letter-spacing:-0.426px;color:#929292">主要 * timg.j...</div>
<div class="x" style="left:94.30px;top:103.10px;font-size:10.8px;letter-spacing:0.000px;color:#2d8ceb;transform:scale(0.8268,1.0000);transform-origin:0 0;-webkit-text-stroke:0.3px #2d8ceb">VID_2020...</div>
<div class="x" style="left:11.93px;top:121.23px;font-size:11px;letter-spacing:-0.200px;color:#9c9c9c">视频</div>
<div class="x" style="left:37.87px;top:137.23px;font-size:11px;letter-spacing:-0.200px;color:#9c9c9c">运动</div>
<div class="x" style="left:37.53px;top:154.63px;font-size:11px;letter-spacing:-0.156px;color:#9c9c9c">不透明度</div>
<div class="x" style="left:37.13px;top:186.63px;font-size:11px;letter-spacing:-0.227px;color:#dedede">蒙版 (1)</div>
<div class="x" style="left:61.05px;top:204.00px;font-size:10px;letter-spacing:0.000px;color:#848484;transform:scale(0.9474,1.0000);transform-origin:0 0">...</div>
<div class="x" style="left:61.05px;top:221.00px;font-size:10px;letter-spacing:0.000px;color:#848484;transform:scale(0.9474,1.0000);transform-origin:0 0">...</div>
<div class="x" style="left:61.05px;top:237.60px;font-size:10px;letter-spacing:0.000px;color:#848484;transform:scale(0.9474,1.0000);transform-origin:0 0">...</div>
<div class="x" style="left:61.05px;top:254.40px;font-size:10px;letter-spacing:0.000px;color:#848484;transform:scale(0.9474,1.0000);transform-origin:0 0">...</div>
<div class="x" style="left:77.23px;top:219.00px;font-size:10.5px;letter-spacing:0.000px;color:#2d8ceb;transform:scale(0.8483,1.0000);transform-origin:0 0;-webkit-text-stroke:0.25px #2d8ceb">10.0</div>
<div class="x" style="left:77.24px;top:235.70px;font-size:10.5px;letter-spacing:0.000px;color:#2d8ceb;transform:scale(0.8438,1.0000);transform-origin:0 0;-webkit-text-stroke:0.25px #2d8ceb">100.0 %</div>
<div class="x" style="left:77.53px;top:252.40px;font-size:10.5px;letter-spacing:0.000px;color:#2d8ceb;transform:scale(0.8000,1.0000);transform-origin:0 0;-webkit-text-stroke:0.25px #2d8ceb">0.0</div>
<div class="x" style="left:91.60px;top:270.83px;font-size:11px;letter-spacing:-0.811px;color:#9c9c9c">已...</div>
<div class="x" style="left:49.53px;top:286.83px;font-size:11px;letter-spacing:-0.756px;color:#9c9c9c">不...</div>
<div class="x" style="left:77.24px;top:286.40px;font-size:10.5px;letter-spacing:0.000px;color:#2d8ceb;transform:scale(0.8438,1.0000);transform-origin:0 0;-webkit-text-stroke:0.25px #2d8ceb">100.0 %</div>
<div class="x" style="left:48.53px;top:303.23px;font-size:11px;letter-spacing:-0.422px;color:#9c9c9c">混...</div>
<div class="x" style="left:83.53px;top:303.03px;font-size:11px;letter-spacing:-1.067px;color:#9c9c9c">正常</div>
<div class="x" style="left:37.30px;top:320.93px;font-size:11px;letter-spacing:-0.392px;color:#7c7c7c">时间重映射</div>
<div class="x" style="left:22.91px;top:136.60px;font-size:12px;letter-spacing:0.000px;color:#c8c8c8;transform:scale(0.8786,1.0000);transform-origin:0 0;font-style:italic">fx</div>
<div class="x" style="left:22.91px;top:153.40px;font-size:12px;letter-spacing:0.000px;color:#c8c8c8;transform:scale(0.8786,1.0000);transform-origin:0 0;font-style:italic">fx</div>
<div class="x" style="left:23.50px;top:320.00px;font-size:12px;letter-spacing:0.000px;color:#5a5a5a;transform:scale(0.9000,1.0000);transform-origin:0 0;font-style:italic">fx</div>
<div class="x" style="left:6.92px;top:359.40px;font-size:10.5px;letter-spacing:0.000px;color:#2d8ceb;transform:scale(0.8305,1.0000);transform-origin:0 0">00:00:53:02</div>
<div class="x" style="left:181.13px;top:71.93px;font-size:11px;letter-spacing:0.433px;color:#b4b4b4">节目:</div>
<div class="x" style="left:208.80px;top:72.00px;font-size:10.5px;letter-spacing:0.000px;color:#b4b4b4;transform:scale(0.8719,1.0000);transform-origin:0 0">VID_20200812_173219</div>
<div class="x" style="left:187.07px;top:300.40px;font-size:12px;letter-spacing:0.000px;color:#2d8ceb;transform:scale(0.9894,1.0000);transform-origin:0 0;-webkit-text-stroke:0.4px #2d8ceb">00:00:53:02</div>
<div class="x" style="left:274.27px;top:300.63px;font-size:11px;letter-spacing:0.400px;color:#9c9c9c">适合</div>
<div class="x" style="left:441.63px;top:300.00px;font-size:10.5px;letter-spacing:0.000px;color:#9c9c9c;transform:scale(0.9975,1.0000);transform-origin:0 0">1/2</div>
<div class="x" style="left:535.97px;top:300.40px;font-size:12px;letter-spacing:0.000px;color:#aaaaaa;transform:scale(0.9846,1.0000);transform-origin:0 0;-webkit-text-stroke:0.3px #aaaaaa">00:02:09:22</div>
<div class="x" style="left:631.93px;top:72.23px;font-size:11px;letter-spacing:0.600px;color:#b0b0b0">效果</div>
<div class="x" style="left:661.27px;top:113.67px;font-size:10.6px;letter-spacing:1.667px;color:#9c9c9c">预设</div>
<div class="x" style="left:661.02px;top:130.40px;font-size:11.5px;letter-spacing:0.000px;color:#9c9c9c;transform:scale(0.7827,1.0000);transform-origin:0 0;width:32.68px;overflow:hidden">Lumetri</div>
<div class="x" style="left:660.93px;top:146.07px;font-size:10.6px;letter-spacing:0.689px;color:#9c9c9c;width:26.07px;overflow:hidden">音频效果</div>
<div class="x" style="left:660.93px;top:161.87px;font-size:10.6px;letter-spacing:0.689px;color:#9c9c9c;width:26.07px;overflow:hidden">音频过渡</div>
<div class="x" style="left:661.27px;top:177.67px;font-size:10.6px;letter-spacing:0.578px;color:#9c9c9c;width:25.73px;overflow:hidden">视频效果</div>
<div class="x" style="left:661.27px;top:193.27px;font-size:10.6px;letter-spacing:0.578px;color:#9c9c9c;width:25.73px;overflow:hidden">视频过渡</div>
<div class="x" style="left:633.07px;top:236.53px;font-size:11px;letter-spacing:0.022px;color:#9c9c9c">基本图形</div>
<div class="x" style="left:633.07px;top:260.63px;font-size:11px;letter-spacing:0.133px;color:#9c9c9c">基本声音</div>
<div class="x" style="left:632.78px;top:285.20px;font-size:11px;letter-spacing:0.000px;color:#9c9c9c;transform:scale(0.8229,1.0000);transform-origin:0 0">Lumetri</div>
<div class="x" style="left:665.87px;top:284.63px;font-size:11px;letter-spacing:-1.133px;color:#9c9c9c">颜色</div>
<div class="x" style="left:633.27px;top:309.13px;font-size:11px;letter-spacing:0.000px;color:#9c9c9c">库</div>
<div class="x" style="left:633.07px;top:333.33px;font-size:11px;letter-spacing:0.067px;color:#9c9c9c">标记</div>
<div class="x" style="left:633.07px;top:357.03px;font-size:11px;letter-spacing:-0.267px;color:#9c9c9c">历史记录</div>
<div class="x" style="left:633.07px;top:381.43px;font-size:11px;letter-spacing:0.400px;color:#9c9c9c">信息</div>
<div class="x" style="left:11.17px;top:381.83px;font-size:11px;letter-spacing:0.460px;color:#dedede">项目:未命名</div>
<div class="x" style="left:35.93px;top:405.83px;font-size:11px;letter-spacing:-0.519px;color:#848484">未命名.prproj</div>
<div class="x" style="left:195.83px;top:382.23px;font-size:11px;letter-spacing:-0.319px;color:#9a9a9a">音频剪辑混合器:</div>
<div class="x" style="left:277.60px;top:381.80px;font-size:10.5px;letter-spacing:0.000px;color:#9a9a9a;transform:scale(0.8647,1.0000);transform-origin:0 0">VID_20200812_173219</div>
<div class="x" style="left:400.53px;top:381.93px;font-size:9px;letter-spacing:0.000px;color:#9a9a9a">×</div>
<div class="x" style="left:413.70px;top:381.80px;font-size:10.5px;letter-spacing:0.000px;color:#dedede;transform:scale(0.8674,1.0000);transform-origin:0 0">VID_20200812_173219</div>
<div class="x" style="left:169.87px;top:404.30px;font-size:12.8px;letter-spacing:0.000px;color:#2d8ceb;transform:scale(0.9930,1.0000);transform-origin:0 0;-webkit-text-stroke:0.4px #2d8ceb">00:00:53:02</div>
<div class="x" style="left:353.71px;top:412.40px;font-size:10px;letter-spacing:0.000px;color:#9a9a9a;transform:scale(0.8788,1.0000);transform-origin:0 0">00:00:30:00</div>
<div class="x" style="left:424.71px;top:412.40px;font-size:10px;letter-spacing:0.000px;color:#9a9a9a;transform:scale(0.8846,1.0000);transform-origin:0 0">00:01:00:00</div>
<div class="x" style="left:495.50px;top:412.40px;font-size:10px;letter-spacing:0.000px;color:#9a9a9a;transform:scale(0.9000,1.0000);transform-origin:0 0">00:01:30:00</div>
<div class="x" style="left:597.43px;top:399.50px;font-size:8.5px;letter-spacing:0.000px;color:#9a9a9a;transform:scale(1.1000,1.0000);transform-origin:0 0">0</div>
<!-- watermark -->
<div class="a" style="left:450.200px;top:424.800px;width:250.800px;height:71.8px;background:#fff;border-top-left-radius:30px 34px"></div>
<svg style="left:0;top:420px" width="702" height="78" viewBox="0 420 702 78">
<path d="M533.4 431.2l3.9 2.2v54l-3.9 3.6" fill="none" stroke="#2d9be8" stroke-width="1.3"/>
<rect x="484.1" y="430.2" width="46.8" height="63" rx="3.4" fill="#2b9ae6"/>
<circle cx="507.8" cy="459.2" r="14.1" fill="none" stroke="#fff" stroke-width="4.6"/>
<path d="M497.4 467.6L484.1 475.4" stroke="#fff" stroke-width="5.2"/>
</svg>
<div class="x" style="left:551.52px;top:422.50px;font-size:13.8px;letter-spacing:0.000px;color:#9c9c9c;transform:scale(0.9754,1.0000);transform-origin:0 0;font-weight:700">PConline</div>
<div class="x" style="left:548.80px;top:455.21px;font-size:58px;letter-spacing:0.000px;color:#5a5a5a;transform:scale(0.6750,1.0175);transform-origin:0 0">I</div>
<div class="x" style="left:560.62px;top:455.21px;font-size:58px;letter-spacing:0.000px;color:#5a5a5a;transform:scale(0.6582,1.0175);transform-origin:0 0">T</div>
<div class="x" style="left:583.32px;top:454.48px;font-size:46px;letter-spacing:0.000px;color:#5a5a5a;transform:scale(1.0264,1.0091);transform-origin:0 0;font-weight:500">百</div>
<div class="x" style="left:628.84px;top:456.67px;font-size:46px;letter-spacing:0.000px;color:#5a5a5a;transform:scale(0.8677,0.9465);transform-origin:0 0;font-weight:500">科</div>

</body>
</html>
